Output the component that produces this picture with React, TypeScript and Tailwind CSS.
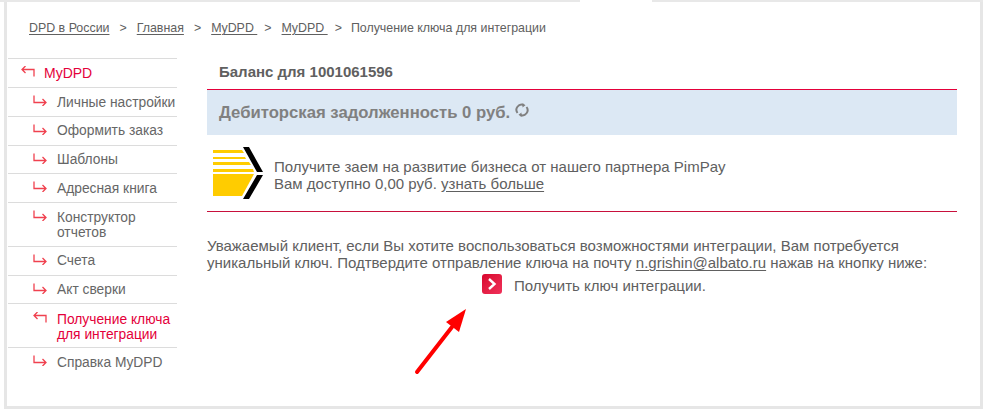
const menu = [
  { label: 'Личные настройки', h: 'h-[29px]' },
  { label: 'Оформить заказ', h: 'h-[29px]', up: true },
  { label: 'Шаблоны', h: 'h-[28px]', up: true },
  { label: 'Адресная книга', h: 'h-[29px]' },
  { label: ['Конструктор', 'отчетов'], h: 'h-[44px]' },
  { label: 'Счета', h: 'h-[29px]', up: true },
  { label: 'Акт сверки', h: 'h-[28px]', up: true },
  { label: ['Получение ключа', 'для интеграции'], h: 'h-[44px]', active: true },
  { label: 'Справка MyDPD', h: 'h-[29px]', last: true },
];

const ArrowRight = () => (
  <svg width="14" height="11" viewBox="0 0 14 11" fill="none" stroke="#f0414f" strokeWidth="1.3" className="shrink-0">
    <path d="M1 0.5V7.5H13M9.5 4L13 7.5L9.5 11" />
  </svg>
);

const ArrowLeft = () => (
  <svg width="14" height="11" viewBox="0 0 14 11" fill="none" stroke="#f0414f" strokeWidth="1.3" className="shrink-0">
    <path d="M13 10.5V3.5H1M4.5 0L1 3.5L4.5 7" />
  </svg>
);

const Crumb = ({ children }: { children: React.ReactNode }) => (
  <a className="underline underline-offset-2 text-[#606060]">{children}</a>
);

export default function App() {
  return (
    <div className="relative h-[411px] w-[983px] overflow-hidden bg-white font-['Liberation_Sans',Arial,sans-serif] text-[13.8px] text-[#666]">
      <div className="flex h-[2px] bg-[#e8e8e8] pl-[580px]">
        <div className="h-[2px] w-[72px] bg-white" />
      </div>
      <div className="ml-[4px] h-[407px] border-x-[3px] border-b-[3px] border-[#e6e6e6]">
        <div className="h-full w-[969px] rounded-tl-md bg-white">
          <div className="flex h-[56px] items-start gap-[10px] pl-[22px] pt-[18px] text-[12.4px] leading-[16px] text-[#606060]">
            <Crumb>DPD в России</Crumb>
            <span>&gt;</span>
            <Crumb>Главная</Crumb>
            <span>&gt;</span>
            <Crumb>MyDPD&nbsp;</Crumb>
            <span className="-ml-[3px]">&gt;</span>
            <Crumb>MyDPD&nbsp;</Crumb>
            <span className="-ml-[3px]">&gt;</span>
            <span className="-ml-px">Получение ключа для интеграции</span>
          </div>
          <div className="flex">
            <nav className="ml-px w-[169px] shrink-0 border-t border-[#dcdcdc]">
              <div className="flex h-[29px] items-start gap-[9px] border-b border-[#dcdcdc] pl-[13px] pt-[7px] text-[14px] text-[#e4003a]">
                <span><ArrowLeft /></span>
                <span className="-mt-[2px] leading-[18px]">MyDPD</span>
              </div>
              {menu.map((item) => (
                <div
                  key={String(item.label)}
                  className={`${item.h} flex items-start gap-[10px] pl-[25px] leading-[15px] ${item.active ? 'pt-[8px]' : 'pt-[7px]'} ${item.last ? '' : 'border-b border-[#dcdcdc]'} ${item.active ? 'text-[#e4003a]' : ''}`}
                >
                  <span>{item.active ? <ArrowLeft /> : <ArrowRight />}</span>
                  <span className={`whitespace-nowrap ${item.up ? '-mt-px' : ''}`}>
                    {Array.isArray(item.label)
                      ? item.label.map((line) => <div key={line}>{line}</div>)
                      : item.label}
                  </span>
                </div>
              ))}
            </nav>
            <main className="ml-[30px] w-[750px]">
              <div className="h-[31px] pl-[12px] pt-[6px] text-[15px] font-bold leading-[16px] text-[#606060]">
                Баланс для 1001061596
              </div>
              <div className="h-px bg-[#e4003a]" />
              <div className="flex h-[45px] items-center gap-[5px] bg-[#dce8f4] pl-[12px] text-[16.7px] font-bold text-[#808080]">
                Дебиторская задолженность 0 руб.
                <svg width="14" height="14" viewBox="0 0 14 14" fill="none" stroke="#808080" strokeWidth="2" className="mb-[5px]">
                  <path d="M2.5 10A5.2 5.2 0 0 1 8.5 2M11.5 4A5.2 5.2 0 0 1 5.5 12" />
                  <path d="M7.5 0L10.5 2.2L7.5 4.4ZM6.5 9.6L3.5 11.8L6.5 14Z" fill="#808080" stroke="none" />
                </svg>
              </div>
              <div className="flex h-[76px] items-start pl-[6px] pt-[12px] text-[15px]">
                <svg width="50" height="52" viewBox="0 0 50 52" className="shrink-0">
                  <path d="M0 3H29L31 6H0ZM0 10H32L33 12H0ZM0 15H36L38 18H0ZM0 22H40L41 25H0Z" fill="#ffcc00" />
                  <path d="M0 27H41L29 49H0Z" fill="#ffcc00" />
                  <path d="M30 0H36L50 25H44ZM44 28H50L36 52H30Z" fill="#000" />
                </svg>
                <div className="ml-[11px] pt-[11px] leading-[17px] text-[#606060]">
                  <div>Получите заем на развитие бизнеса от нашего партнера PimPay</div>
                  <div>
                    Вам доступно 0,00 руб. <a className="underline underline-offset-2">узнать больше</a>
                  </div>
                </div>
              </div>
              <div className="h-px bg-[#c8103c]" />
              <div className="pt-[25px] text-[15px] leading-[17px] text-[#606060]">
                <div className="whitespace-nowrap">Уважаемый клиент, если Вы хотите воспользоваться возможностями интеграции, Вам потребуется</div>
                <div className="whitespace-nowrap">
                  уникальный ключ. Подтвердите отправление ключа на почту <a className="underline underline-offset-2">n.grishin@albato.ru</a> нажав на кнопку ниже:
                </div>
              </div>
              <div className="flex items-center pl-[275px] pt-[3px] text-[15px] text-[#606060]">
                <div className="mb-[4px] flex h-[20px] w-[20px] items-center justify-center rounded-[3px] bg-gradient-to-br from-[#d8002c] to-[#f0305a]">
                  <svg width="10" height="12" viewBox="0 0 10 12" fill="none" stroke="#fff" strokeWidth="2.4">
                    <path d="M2 1L7.5 6L2 11" />
                  </svg>
                </div>
                <span className="ml-[12px]">Получить ключ интеграции.</span>
              </div>
            </main>
          </div>
        </div>
      </div>
      <svg width="60" height="72" viewBox="0 0 60 72" className="absolute left-[412px] top-[306px]">
        <path d="M5 66L40 21" stroke="#f00" strokeWidth="4" strokeLinecap="round" />
        <path d="M54 3L47 26L34 16Z" fill="#f00" />
      </svg>
    </div>
  );
}
